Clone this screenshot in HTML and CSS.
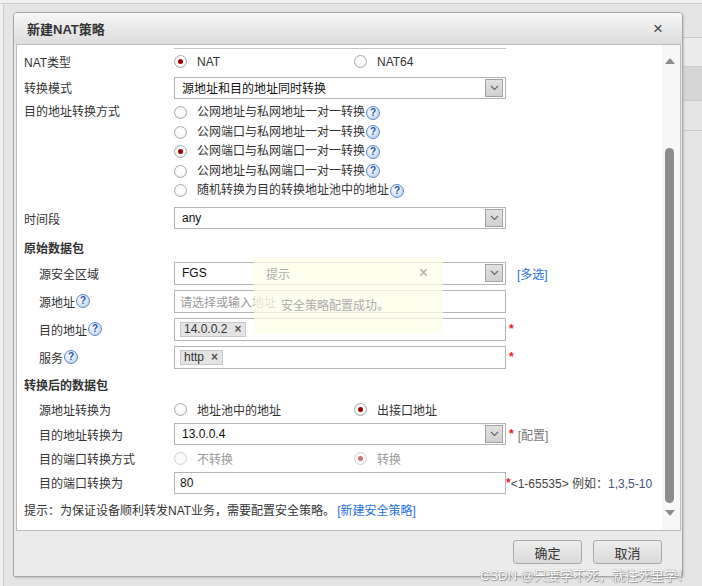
FILE: index.html
```html
<!DOCTYPE html>
<html lang="zh-CN">
<head>
<meta charset="utf-8">
<title>新建NAT策略</title>
<link rel="stylesheet" href="styles.css">
</head>
<body>
<div class="dialog">
  <div class="titlebar">
    <span class="title">新建NAT策略</span>
    <span class="close">×</span>
  </div>
  <div class="content">
    <div class="form">
      <div class="row h4"><div class="ghost"></div></div>

      <div class="row h25">
        <div class="label">NAT类型</div>
        <div class="radios">
          <span class="radio"><span class="circle on"></span>NAT</span>
          <span class="radio"><span class="circle"></span>NAT64</span>
        </div>
      </div>

      <div class="row h27">
        <div class="label">转换模式</div>
        <div class="select"><span class="val">源地址和目的地址同时转换</span><span class="drop"><svg width="9" height="6" viewBox="0 0 9 6"><polyline points="1,1 4.5,4.5 8,1" fill="none" stroke="#666" stroke-width="1.2"/></svg></span></div>
      </div>

      <div class="row h100 top">
        <div class="label lh">目的地址转换方式</div>
        <div class="radio-list">
          <span class="radio lh"><span class="circle"></span>公网地址与私网地址一对一转换<span class="help">?</span></span>
          <span class="radio lh"><span class="circle"></span>公网端口与私网地址一对一转换<span class="help">?</span></span>
          <span class="radio lh"><span class="circle on"></span>公网端口与私网端口一对一转换<span class="help">?</span></span>
          <span class="radio lh"><span class="circle"></span>公网地址与私网端口一对一转换<span class="help">?</span></span>
          <span class="radio lh"><span class="circle"></span>随机转换为目的转换地址池中的地址<span class="help">?</span></span>
        </div>
      </div>

      <div class="row h34">
        <div class="label">时间段</div>
        <div class="select"><span class="val">any</span><span class="drop"><svg width="9" height="6" viewBox="0 0 9 6"><polyline points="1,1 4.5,4.5 8,1" fill="none" stroke="#666" stroke-width="1.2"/></svg></span></div>
      </div>

      <div class="row h24"><div class="heading">原始数据包</div></div>

      <div class="row h28">
        <div class="label sub">源安全区域</div>
        <div class="select tall"><span class="val">FGS</span><span class="drop"><svg width="9" height="6" viewBox="0 0 9 6"><polyline points="1,1 4.5,4.5 8,1" fill="none" stroke="#666" stroke-width="1.2"/></svg></span></div>
        <span class="link extra">[多选]</span>
      </div>

      <div class="row h28">
        <div class="label sub">源地址<span class="help">?</span></div>
        <div class="input tall"><span class="placeholder">请选择或输入地址</span></div>
      </div>

      <div class="row h28">
        <div class="label sub">目的地址<span class="help">?</span></div>
        <div class="input tall"><span class="tag">14.0.0.2<span class="x">×</span></span></div>
        <span class="req">*</span>
      </div>

      <div class="row h28">
        <div class="label sub">服务<span class="help">?</span></div>
        <div class="input tall"><span class="tag">http<span class="x">×</span></span></div>
        <span class="req">*</span>
      </div>

      <div class="row h26"><div class="heading">转换后的数据包</div></div>

      <div class="row h24">
        <div class="label sub">源地址转换为</div>
        <div class="radios">
          <span class="radio"><span class="circle"></span>地址池中的地址</span>
          <span class="radio"><span class="circle on"></span>出接口地址</span>
        </div>
      </div>

      <div class="row h26">
        <div class="label sub">目的地址转换为</div>
        <div class="select"><span class="val">13.0.0.4</span><span class="drop"><svg width="9" height="6" viewBox="0 0 9 6"><polyline points="1,1 4.5,4.5 8,1" fill="none" stroke="#666" stroke-width="1.2"/></svg></span></div>
        <span class="req">*</span><span class="cfg">[配置]</span>
      </div>

      <div class="row h23">
        <div class="label sub">目的端口转换方式</div>
        <div class="radios disabled">
          <span class="radio"><span class="circle"></span>不转换</span>
          <span class="radio"><span class="circle on"></span>转换</span>
        </div>
      </div>

      <div class="row h25">
        <div class="label sub">目的端口转换为</div>
        <div class="input"><span class="val">80</span></div>
        <span class="req tight">*</span><span class="hint">&lt;1-65535&gt; 例如：<span class="nums">1,3,5-10</span></span>
      </div>

      <div class="row h28">
        <div class="note">提示：为保证设备顺利转发NAT业务，需要配置安全策略。<span class="link">[新建安全策略]</span></div>
      </div>
    </div>

    <div class="scrollbar">
      <div class="sb-up"><span class="tri-up"></span></div>
      <div class="sb-track"><div class="thumb"></div></div>
      <div class="sb-down"><span class="tri-down"></span></div>
    </div>

    <div class="toast">
      <div class="toast-head"><span>提示</span><span class="toast-x">×</span></div>
      <div class="toast-msg">安全策略配置成功。</div>
    </div>
  </div>
  <div class="footer">
    <button class="btn">确定</button>
    <button class="btn">取消</button>
  </div>
</div>
<div class="watermark">CSDN @只要学不死，就往死里学！</div>
</body>
</html>
```

FILE: styles.css
```css
html, body {
  margin: 0;
  height: 586px;
  overflow: hidden;
}
body {
  box-sizing: border-box;
  padding: 12px 0 0 13px;
  position: relative;
  font-family: "Liberation Sans", "Noto Sans CJK SC", sans-serif;
  font-size: 12px;
  color: #333;
  background:
    linear-gradient(#cdcdcd, #cdcdcd) 0 3px / 100% 1px no-repeat,
    linear-gradient(#f2f2f2, #f2f2f2) 0 0 / 100% 3px no-repeat,
    linear-gradient(#cdcdcd, #cdcdcd) 3px 0 / 1px 100% no-repeat,
    linear-gradient(#f0f0f0, #f0f0f0) 0 0 / 3px 100% no-repeat,
    linear-gradient(#c9c9c9, #c9c9c9) right 0 top 37px / 18px 1px no-repeat,
    linear-gradient(#c9c9c9, #c9c9c9) right 0 top 66px / 18px 1px no-repeat,
    linear-gradient(#d6d6d6, #d6d6d6) right 0 top 67px / 18px 33px no-repeat,
    linear-gradient(#c9c9c9, #c9c9c9) right 0 top 100px / 18px 1px no-repeat,
    linear-gradient(#c9c9c9, #c9c9c9) right 0 top 130px / 18px 1px no-repeat,
    linear-gradient(#ececec, #ececec) right 0 top 38px / 18px 28px no-repeat,
    #e5e5e5;
}

.dialog {
  box-sizing: border-box;
  width: 670px;
  height: 565px;
  border: 1px solid #a6a6a6;
  border-radius: 4px 4px 2px 2px;
  background: #ebebeb;
  display: flex;
  flex-direction: column;
  box-shadow: 1px 1px 2px rgba(0, 0, 0, 0.15);
}

.titlebar {
  height: 31px;
  flex: none;
  display: flex;
  align-items: center;
  justify-content: space-between;
  padding: 0 19px 0 13px;
  background: linear-gradient(#f7f7f7, #dcdcdc);
  border-radius: 3px 3px 0 0;
}
.title {
  font-size: 13px;
  font-weight: bold;
  color: #333;
}
.close {
  font-size: 17px;
  color: #444;
  line-height: 1;
}

.content {
  position: relative;
  flex: none;
  height: 487px;
  box-sizing: border-box;
  margin: 0 1px 0 2px;
  border: 1px solid #bdbdbd;
  background: #fff;
  display: flex;
  overflow: hidden;
}

.form {
  width: 645px;
  flex: none;
  padding-left: 7px;
  box-sizing: border-box;
  display: flex;
  flex-direction: column;
}

.row {
  display: flex;
  align-items: center;
  flex: none;
}
.row.top { align-items: flex-start; }
.h4 { height: 4px; align-items: flex-start; }
.h23 { height: 23px; }
.h24 { height: 24px; }
.h25 { height: 25px; }
.h26 { height: 26px; }
.h27 { height: 27px; }
.h28 { height: 28px; }
.h34 { height: 34px; }
.h100 { height: 100px; padding-top: 2px; box-sizing: border-box; }

.ghost {
  margin-left: 150px;
  width: 332px;
  height: 3px;
  border-bottom: 1px solid #c4c4c4;
}

.label {
  width: 150px;
  flex: none;
  display: flex;
  align-items: center;
  color: #333;
}
.label.sub { padding-left: 15px; box-sizing: border-box; }
.lh { height: 19.5px; line-height: 19.5px; }

.heading {
  font-weight: bold;
  color: #333;
}

.radios {
  display: flex;
  align-items: center;
}
.radio-list {
  display: flex;
  flex-direction: column;
}
.radio {
  display: inline-flex;
  align-items: center;
  width: 180px;
  white-space: nowrap;
  color: #333;
}
.radio-list .radio { width: auto; }
.circle {
  width: 11px;
  height: 11px;
  border: 1px solid #a9a9a9;
  border-radius: 50%;
  background: radial-gradient(circle at 50% 40%, #fff 0, #fafafa 50%, #e6e6e6 100%);
  margin-right: 10px;
  display: inline-flex;
  align-items: center;
  justify-content: center;
  flex: none;
}
.circle.on::after {
  content: "";
  width: 5px;
  height: 5px;
  border-radius: 50%;
  background: #9c0000;
}
.disabled .radio { color: #999; }
.disabled .circle { border-color: #d2d2d2; background: #fafafa; }
.disabled .circle.on::after { background: #c97070; }

.help {
  display: inline-flex;
  align-items: center;
  justify-content: center;
  width: 12px;
  height: 12px;
  margin-left: 1px;
  border: 1px solid #5b88cc;
  border-radius: 50%;
  background: radial-gradient(circle at 40% 35%, #fff 0, #dfe9f8 45%, #a8c2ea 100%);
  color: #2455a6;
  font: bold 10px/1 "Liberation Sans", sans-serif;
  flex: none;
}

.select, .input {
  box-sizing: border-box;
  width: 332px;
  height: 22px;
  flex: none;
  border: 1px solid #b5b5b5;
  background: #fff;
  display: flex;
  align-items: center;
  color: #111;
}
.tall { height: 23px; }
.select { padding-left: 7px; }
.select .val { flex: 1; }
.input { padding-left: 5px; }
.drop {
  box-sizing: border-box;
  width: 18px;
  height: 18px;
  margin-right: 2px;
  border: 1px solid #a2a2a2;
  background: linear-gradient(#e2e2e2, #d0d0d0);
  display: flex;
  align-items: center;
  justify-content: center;
}
.placeholder { color: #999; }
.tag {
  display: inline-flex;
  align-items: center;
  height: 15px;
  box-sizing: border-box;
  padding: 0 4px 0 3px;
  background: #e4e4e4;
  border: 1px solid #c8c8c8;
  color: #333;
}
.tag .x {
  margin-left: 7px;
  font-weight: bold;
  color: #555;
  font-size: 12px;
}

.req {
  color: #e8202a;
  margin-left: 3px;
  font-weight: bold;
}
.req.tight { margin-left: 0; }
.link { color: #1f6fdc; margin-left: 2px; }
.link.extra { margin-left: 11px; }
.cfg { color: #777; margin-left: 4px; }
.hint { color: #444; }
.nums { color: #3f5675; }
.note { color: #333; }

.scrollbar {
  width: 18px;
  flex: none;
  background: #f7f7f7;
  display: flex;
  flex-direction: column;
}
.sb-up {
  height: 32px;
  display: flex;
  align-items: center;
  justify-content: center;
  padding-right: 2px;
}
.sb-track {
  flex: 1;
  padding-top: 71px;
}
.thumb {
  width: 9px;
  height: 355px;
  margin-left: 3px;
  border-radius: 5px;
  background: #8c8c8c;
}
.sb-down {
  height: 20px;
  margin-bottom: 7px;
  display: flex;
  align-items: center;
  justify-content: center;
  padding-right: 2px;
}
.tri-up {
  width: 0;
  height: 0;
  border-left: 5px solid transparent;
  border-right: 5px solid transparent;
  border-bottom: 6px solid #8c8c8c;
}
.tri-down {
  width: 0;
  height: 0;
  border-left: 5px solid transparent;
  border-right: 5px solid transparent;
  border-top: 6px solid #8c8c8c;
}

.toast {
  position: absolute;
  left: 237px;
  top: 212px;
  width: 189px;
  height: 76px;
  background: rgba(253, 253, 232, 0.72);
  display: flex;
  flex-direction: column;
  color: #adadad;
}
.toast-head {
  height: 32px;
  display: flex;
  align-items: center;
  justify-content: space-between;
  padding: 0 15px 0 12px;
}
.toast-x { font-size: 16px; color: #aaa; }
.toast-msg {
  height: 30px;
  display: flex;
  align-items: center;
  padding-left: 27px;
}

.footer {
  flex: 1;
  display: flex;
  justify-content: flex-end;
  align-items: flex-start;
  gap: 11px;
  padding: 9px 20px 0 0;
}
.btn {
  width: 69px;
  height: 24px;
  border: 1px solid #a9a9a9;
  border-radius: 3px;
  background: linear-gradient(#eeeeee, #d9d9d9);
  font-family: "Liberation Sans", "Noto Sans CJK SC", sans-serif;
  font-size: 13px;
  color: #333;
  padding: 0;
}

.watermark {
  position: absolute;
  left: 480px;
  top: 565px;
  font-size: 13px;
  color: #fff;
  white-space: nowrap;
  text-shadow: 0 0 1px #777, 1px 1px 1px #999;
}
```
